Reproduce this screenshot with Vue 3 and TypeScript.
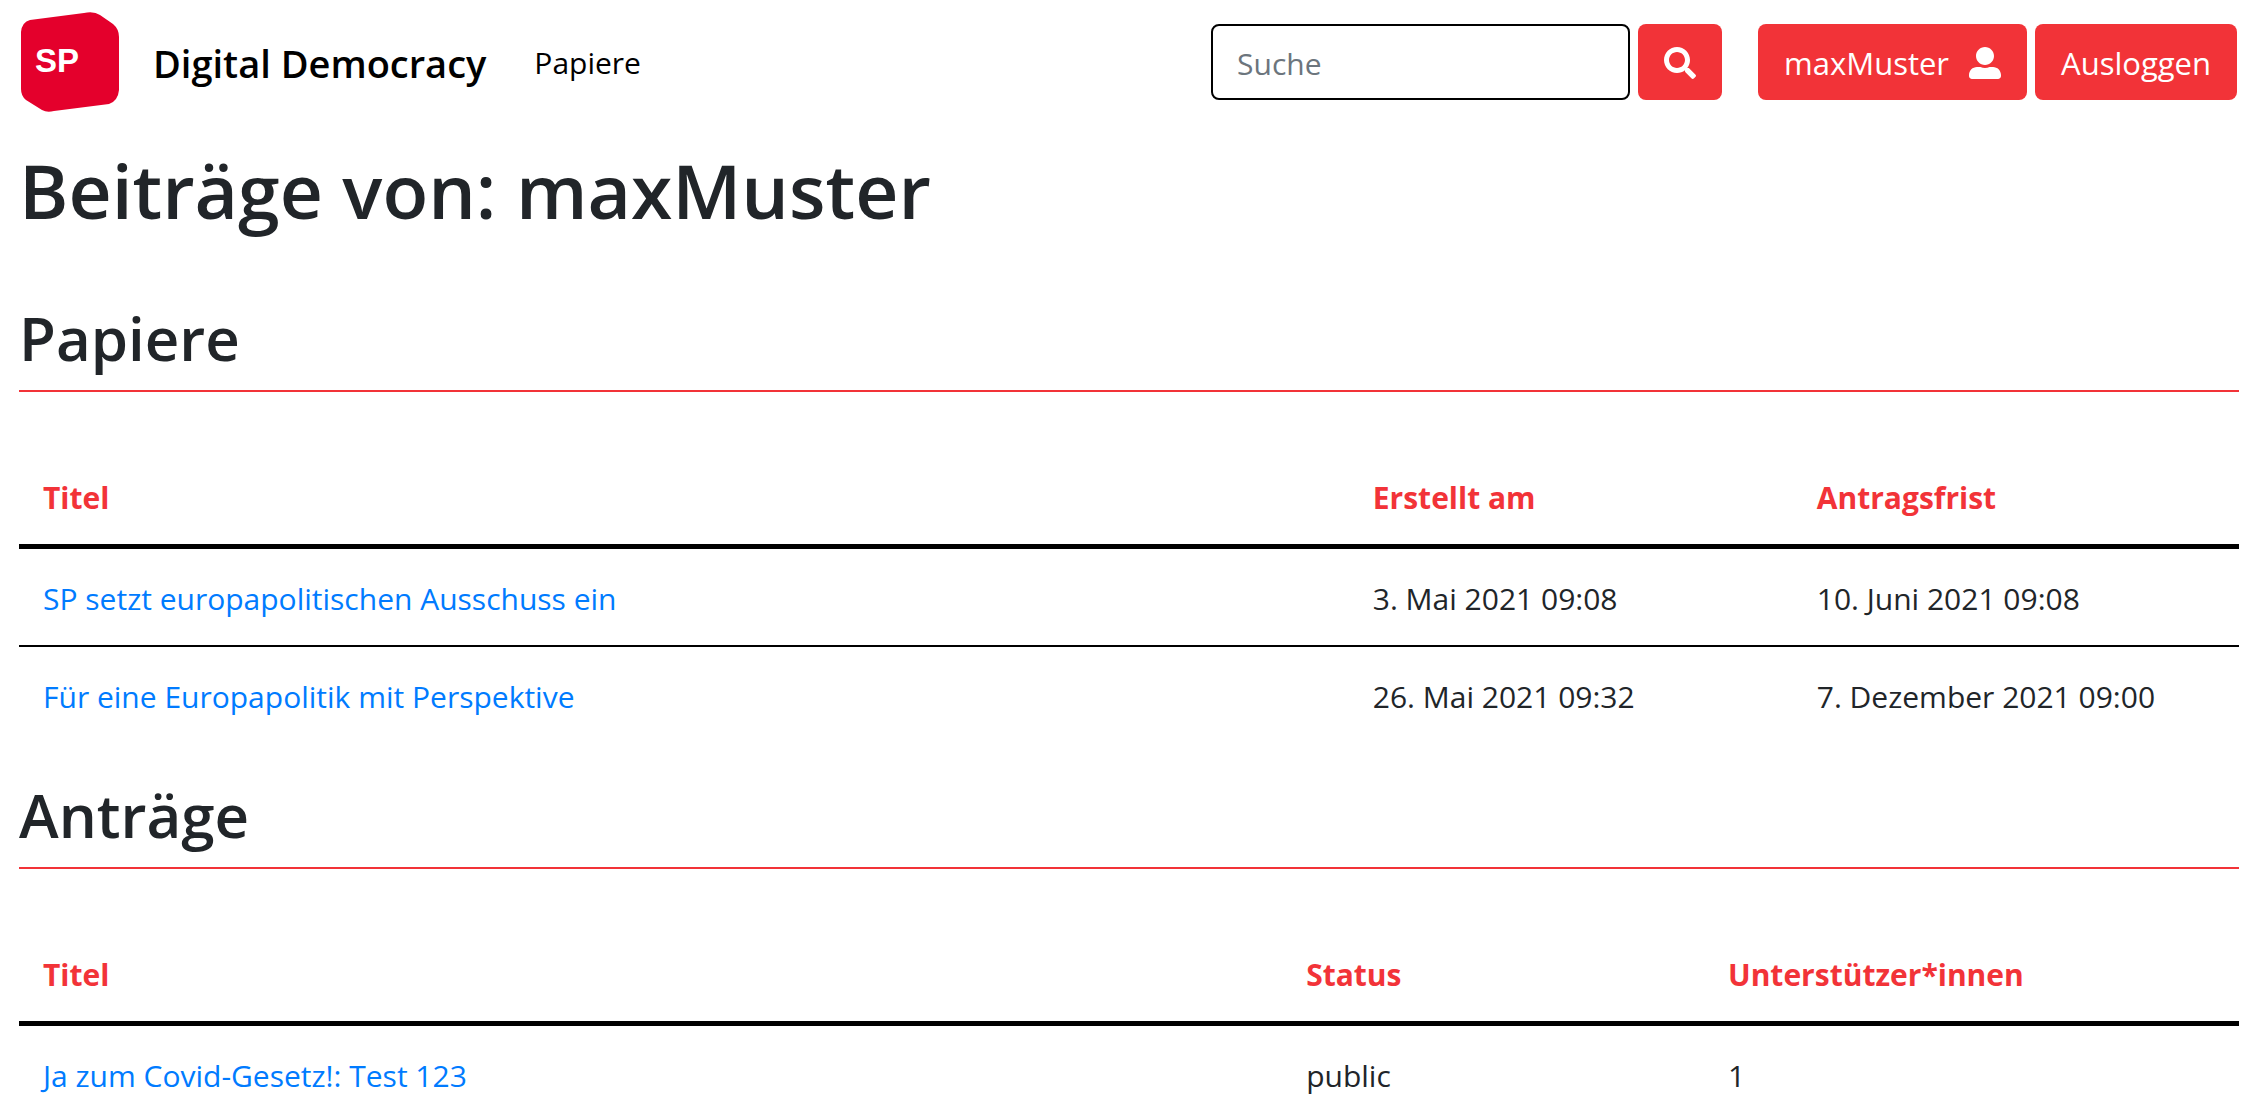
<script setup lang="ts">
import { ref } from 'vue'

interface Cell {
  text: string
  href?: string
}
interface Section {
  id: string
  title: string
  columns: { label: string; width: string }[]
  rows: Cell[][]
}

const query = ref('')

const sections: Section[] = [
  {
    id: 'papiere',
    title: 'Papiere',
    columns: [
      { label: 'Titel', width: '59.9%' },
      { label: 'Erstellt am', width: '20%' },
      { label: 'Antragsfrist', width: '20.1%' },
    ],
    rows: [
      [
        { text: 'SP setzt europapolitischen Ausschuss ein', href: '#papier-1' },
        { text: '3. Mai 2021 09:08' },
        { text: '10. Juni 2021 09:08' },
      ],
      [
        { text: 'Für eine Europapolitik mit Perspektive', href: '#papier-2' },
        { text: '26. Mai 2021 09:32' },
        { text: '7. Dezember 2021 09:00' },
      ],
    ],
  },
  {
    id: 'antraege',
    title: 'Anträge',
    columns: [
      { label: 'Titel', width: '56.9%' },
      { label: 'Status', width: '19%' },
      { label: 'Unterstützer*innen', width: '24.1%' },
    ],
    rows: [
      [
        { text: 'Ja zum Covid-Gesetz!: Test 123', href: '#antrag-1' },
        { text: 'public' },
        { text: '1' },
      ],
    ],
  },
]
</script>

<template>
  <div class="page">
    <header class="navbar">
      <a class="brand" href="#">
        <svg class="logo" viewBox="0 0 100 100" role="img" aria-label="SP">
          <path
            d="M10 8 L64 1 Q74 -1 80 3 L93 12 Q99 17 99 25 V78 Q98 89 89 92 L34 99 Q27 101 22 98 L6 88 Q1 84 1 77 V20 Q2 10 10 8 Z"
            fill="#e4002c"
          />
          <text x="15" y="60" class="logo-text">SP</text>
        </svg>
        <span class="brand-name">Digital Democracy</span>
      </a>
      <nav class="links"><a href="#papiere">Papiere</a></nav>
      <form class="search" role="search" @submit.prevent>
        <input v-model="query" type="search" placeholder="Suche" aria-label="Suche" />
        <button class="btn" type="submit" aria-label="Suchen">
          <svg class="icon" viewBox="0 0 512 512" aria-hidden="true">
            <path
              fill="currentColor"
              d="M505 442.7L405.3 343c-4.5-4.5-10.6-7-17-7H372c27.6-35.3 44-79.7 44-128C416 93.1 322.9 0 208 0S0 93.1 0 208s93.1 208 208 208c48.3 0 92.7-16.4 128-44v16.3c0 6.4 2.5 12.5 7 17l99.7 99.7c9.4 9.4 24.6 9.4 33.9 0l28.3-28.3c9.4-9.4 9.4-24.6.1-34zM208 336c-70.7 0-128-57.2-128-128 0-70.7 57.2-128 128-128 70.7 0 128 57.2 128 128 0 70.7-57.2 128-128 128z"
            />
          </svg>
        </button>
      </form>
      <div class="account">
        <button class="btn" type="button">
          maxMuster
          <svg class="icon" viewBox="0 0 512 512" aria-hidden="true">
            <path
              fill="currentColor"
              d="M256 288c79.5 0 144-64.5 144-144S335.5 0 256 0 112 64.5 112 144s64.5 144 144 144zm128 32h-55.1c-22.2 10.2-46.9 16-72.9 16s-50.6-5.8-72.9-16H128C57.3 320 0 377.3 0 448v16c0 26.5 21.5 48 48 48h416c26.5 0 48-21.5 48-48v-16c0-70.7-57.3-128-128-128z"
            />
          </svg>
        </button>
        <button class="btn" type="button">Ausloggen</button>
      </div>
    </header>

    <main class="content">
      <h1>Beiträge von: maxMuster</h1>
      <section v-for="section in sections" :id="section.id" :key="section.id">
        <h2>{{ section.title }}</h2>
        <table>
          <colgroup>
            <col v-for="col in section.columns" :key="col.label" :style="{ width: col.width }" />
          </colgroup>
          <thead>
            <tr>
              <th v-for="col in section.columns" :key="col.label" scope="col">{{ col.label }}</th>
            </tr>
          </thead>
          <tbody>
            <tr v-for="(row, r) in section.rows" :key="r">
              <td v-for="(cell, c) in row" :key="c">
                <a v-if="cell.href" :href="cell.href">{{ cell.text }}</a>
                <template v-else>{{ cell.text }}</template>
              </td>
            </tr>
          </tbody>
        </table>
      </section>
    </main>
  </div>
</template>

<style>
body {
  background: #fff;
}
</style>

<style scoped>
.page {
  font-family: 'Open Sans', 'Noto Sans', sans-serif;
  font-size: 30px;
  line-height: 48px;
  color: #212529;
}
.navbar {
  display: flex;
  align-items: center;
  box-sizing: border-box;
  padding: 12px 6px 12px 20px;
}
.brand {
  display: flex;
  align-items: center;
  gap: 33px;
  color: #000;
  text-decoration: none;
}
.logo {
  display: block;
  width: 100px;
  height: 100px;
}
.logo-text {
  font: bold 33px 'Liberation Sans', sans-serif;
  fill: #fff;
}
.brand-name {
  padding-top: 2px;
  font-size: 38px;
  font-weight: 600;
}
.links {
  flex: 1;
  margin-left: 48px;
  padding-top: 2px;
}
.links a {
  color: #000;
  text-decoration: none;
}
.search,
.account {
  display: flex;
  gap: 8px;
}
.account {
  margin-left: 36px;
}
.search input {
  box-sizing: border-box;
  width: 419px;
  height: 76px;
  padding: 2px 24px 0;
  border: 2px solid #000;
  border-radius: 8px;
  background: #fff;
  color: #495057;
  font: inherit;
  outline: none;
  appearance: none;
}
.search input::placeholder {
  color: #6c757d;
  opacity: 1;
}
.btn {
  display: flex;
  align-items: center;
  gap: 20px;
  height: 76px;
  padding: 2px 26px 0;
  border: 0;
  border-radius: 8px;
  background: #f23338;
  color: #fff;
  font: inherit;
  font-size: 31px;
  cursor: pointer;
}
.icon {
  display: block;
  width: 32px;
  height: 32px;
}
.content {
  padding: 18px 4px 0 19px;
}
h1 {
  margin: 0 0 62px;
  font-size: 75px;
  font-weight: 600;
  line-height: 96px;
}
section + section {
  margin-top: 34px;
}
h2 {
  margin: 0 0 56px;
  padding-bottom: 14px;
  border-bottom: 2px solid #f23338;
  font-size: 60px;
  font-weight: 600;
  line-height: 76px;
}
table {
  width: 100%;
  border-collapse: separate;
  border-spacing: 0;
  table-layout: fixed;
}
th,
td {
  padding: 26px 24px 22px;
  text-align: left;
}
th {
  border-bottom: 5px solid #000;
  color: #f23338;
  font-weight: 700;
}
tr + tr td {
  border-top: 2px solid #000;
}
td a {
  color: #007bff;
  text-decoration: none;
}
</style>
